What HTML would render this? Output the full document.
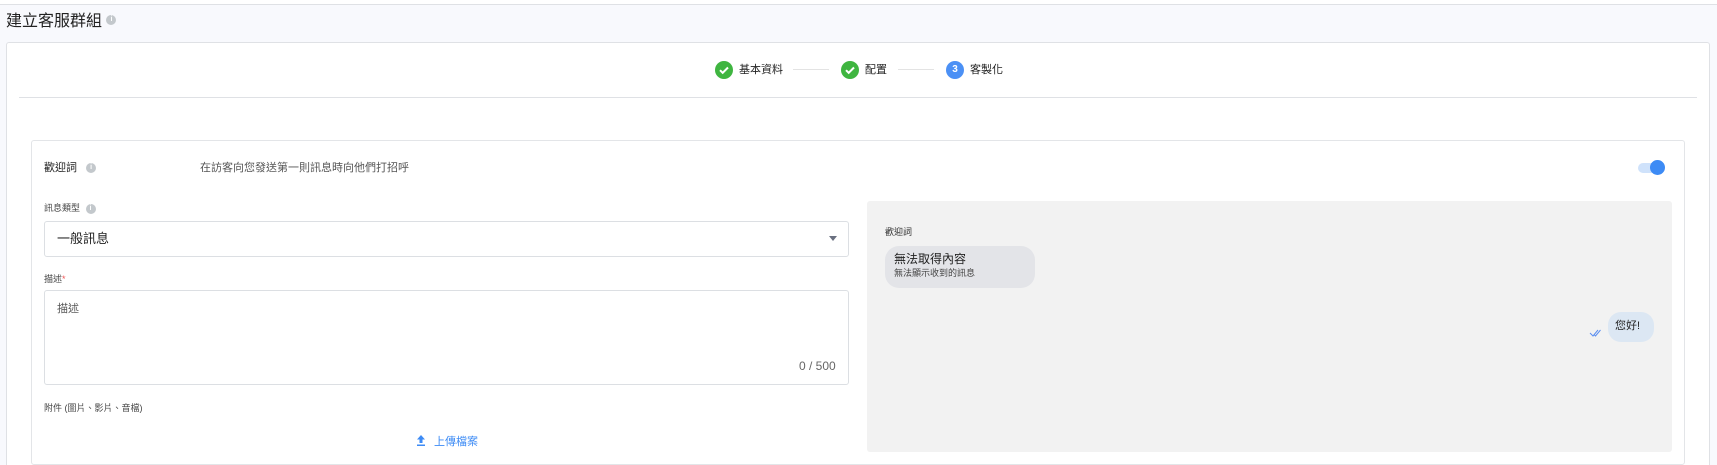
<!DOCTYPE html>
<html style="height:465px;overflow:hidden"><head><meta charset="utf-8"><style>
*{box-sizing:border-box;margin:0;padding:0}
body{width:1717px;height:465px;overflow:hidden;background:#f8f9fd;font-family:"Liberation Sans","Noto Sans CJK TC",sans-serif;color:#222;position:relative}
.a{position:absolute;white-space:nowrap}
.info{display:inline-block;width:10px;height:10px;border-radius:50%;background:#c3c8cc;vertical-align:middle;color:#fff;font-size:7px;line-height:10px;text-align:center;font-weight:bold}
</style></head><body>
<div class="a" style="left:0;top:0;width:1717px;height:5px;background:#fff;border-bottom:1px solid #dfe1e5"></div>
<div class="a" style="left:6px;top:12px;font-size:16px;line-height:20px;color:#222">建立客服群組 <span class="info" style="margin-top:-3px">i</span></div>
<div class="a" style="left:6px;top:42px;width:1704px;height:423px;background:#fff;border:1px solid #dfe1e5;border-bottom:none;border-radius:3px 3px 0 0"></div>
<div class="a" style="left:715px;top:61px;width:18px;height:18px;border-radius:50%;background:#3fb540"><svg width="18" height="18" viewBox="0 0 18 18"><path d="M5 9.2l2.7 2.6L13 6.5" fill="none" stroke="#fff" stroke-width="2"/></svg></div>
<div class="a" style="left:739px;top:62px;font-size:11px;line-height:16px">基本資料</div>
<div class="a" style="left:793px;top:69px;width:36px;height:1px;background:#e3e3e3"></div>
<div class="a" style="left:841px;top:61px;width:18px;height:18px;border-radius:50%;background:#3fb540"><svg width="18" height="18" viewBox="0 0 18 18"><path d="M5 9.2l2.7 2.6L13 6.5" fill="none" stroke="#fff" stroke-width="2"/></svg></div>
<div class="a" style="left:865px;top:62px;font-size:11px;line-height:16px">配置</div>
<div class="a" style="left:898px;top:69px;width:36px;height:1px;background:#e3e3e3"></div>
<div class="a" style="left:946px;top:61px;width:18px;height:18px;border-radius:50%;background:#4b90f5;color:#fff;font-size:10px;line-height:18px;text-align:center;font-weight:bold">3</div>
<div class="a" style="left:970px;top:62px;font-size:11px;line-height:16px">客製化</div>
<div class="a" style="left:19px;top:97px;width:1678px;height:1px;background:#dfe1e5"></div>
<div class="a" style="left:31px;top:140px;width:1654px;height:325px;border:1px solid #e3e5e8;border-radius:3px;background:#fff"></div>
<div class="a" style="left:44px;top:160px;font-size:11px;line-height:16px">歡迎詞 <span class="info" style="margin-left:6px">i</span></div>
<div class="a" style="left:200px;top:160px;font-size:11px;line-height:16px;color:#555">在訪客向您發送第一則訊息時向他們打招呼</div>
<div class="a" style="left:1638px;top:163px;width:26px;height:10px;border-radius:5px;background:#cfe2fb"></div>
<div class="a" style="left:1650px;top:160px;width:15px;height:15px;border-radius:50%;background:#3d8bf5"></div>
<div class="a" style="left:44px;top:201px;font-size:9px;line-height:14px;color:#444">訊息類型 <span class="info" style="margin-left:3px">i</span></div>
<div class="a" style="left:44px;top:221px;width:805px;height:36px;border:1px solid #dcdfe3;border-radius:3px"></div>
<div class="a" style="left:57px;top:230px;font-size:13px;line-height:18px">一般訊息</div>
<div class="a" style="left:829px;top:236px;width:0;height:0;border-left:4px solid transparent;border-right:4px solid transparent;border-top:5px solid #6a7080"></div>
<div class="a" style="left:44px;top:273px;font-size:9px;line-height:12px;color:#444">描述<span style="color:#e55">*</span></div>
<div class="a" style="left:44px;top:290px;width:805px;height:95px;border:1px solid #dcdfe3;border-radius:3px"></div>
<div class="a" style="left:57px;top:301px;font-size:11px;line-height:16px;color:#555">描述</div>
<div class="a" style="left:799px;top:358px;font-size:12px;line-height:16px;color:#666">0 / 500</div>
<div class="a" style="left:44px;top:402px;font-size:9px;line-height:12px;color:#444">附件 (圖片、影片、音檔)</div>
<div class="a" style="left:416px;top:434px;font-size:11px;line-height:16px;color:#3d8bf5"><svg width="10" height="12" viewBox="0 0 10 12" style="vertical-align:-1px;margin-right:8px"><path d="M5 1L1 5.5h2.5V9h3V5.5H9z" fill="#3d8bf5"/><rect x="1" y="10.5" width="8" height="1.5" fill="#3d8bf5"/></svg>上傳檔案</div>
<div class="a" style="left:867px;top:201px;width:805px;height:251px;background:#f2f2f2;border-radius:3px"></div>
<div class="a" style="left:885px;top:226px;font-size:9px;line-height:12px;color:#333">歡迎詞</div>
<div class="a" style="left:885px;top:246px;width:150px;height:42px;border-radius:14px;background:#e3e4e8"></div>
<div class="a" style="left:894px;top:251px;font-size:12px;line-height:16px;color:#222">無法取得內容</div>
<div class="a" style="left:894px;top:267px;font-size:9px;line-height:12px;color:#444">無法顯示收到的訊息</div>
<div class="a" style="left:1608px;top:312px;width:46px;height:30px;border-radius:13px;background:#dce7f3"></div>
<div class="a" style="left:1615px;top:319px;font-size:11px;line-height:14px;color:#222">您好!</div>
<svg class="a" style="left:1589px;top:329px" width="14" height="8" viewBox="0 0 14 8"><path d="M1 4l3 3 5-6M5 5.5l1.5 1.5 5-6" fill="none" stroke="#5b8ef0" stroke-width="1"/></svg>
</body></html>
